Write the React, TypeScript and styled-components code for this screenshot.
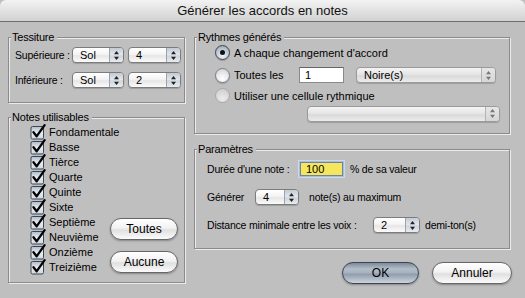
import React from 'react';
import styled, { createGlobalStyle, css } from 'styled-components';

const GlobalStyle = createGlobalStyle`
  html, body {
    margin: 0;
    padding: 0;
    background: #bfbfbf;
  }
  body {
    font-family: 'Liberation Sans', Arial, sans-serif;
    font-size: 11px;
    color: #000;
  }
`;

const Window = styled.div`
  width: 525px;
  height: 298px;
  overflow: hidden;
  background: #bfbfbf;
`;

const TitleBar = styled.div`
  height: 21px;
  border-bottom: 1px solid #6e6e6e;
  border-radius: 6px 6px 0 0;
  background: linear-gradient(#f3f3f3, #e2e2e2 50%, #d2d2d2);
  display: flex;
  align-items: center;
  justify-content: center;
  font-size: 13px;
  color: #111;
`;

const Body = styled.div`
  display: flex;
  gap: 9px;
  padding-left: 8px;
`;

const Column = styled.div<{ $w: number }>`
  width: ${(p) => p.$w}px;
  display: flex;
  flex-direction: column;
`;

const Group = styled.div<{ $top: number; $h: number }>`
  position: relative;
  box-sizing: border-box;
  margin-top: ${(p) => p.$top}px;
  height: ${(p) => p.$h}px;
  border: 1px solid #8b8b8b;
  box-shadow: inset 1px 1px 0 #ececec, 1px 1px 0 #ececec;
`;

const Legend = styled.span`
  position: absolute;
  top: -7px;
  left: 2px;
  padding: 0 3px 0 1px;
  background: #bfbfbf;
  line-height: 12px;
  font-size: 11px;
  letter-spacing: -0.2px;
`;

const Inner = styled.div<{ $pt: number; $pl: number }>`
  padding: ${(p) => p.$pt}px 0 0 ${(p) => p.$pl}px;
`;

const Row = styled.div<{ $h?: number; $mt?: number }>`
  display: flex;
  align-items: center;
  height: ${(p) => p.$h ?? 16}px;
  margin-top: ${(p) => p.$mt ?? 0}px;
`;

const Label = styled.span<{ $w?: number }>`
  width: ${(p) => (p.$w ? `${p.$w}px` : 'auto')};
  flex-shrink: 0;
  white-space: nowrap;
  font-size: 10.5px;
  letter-spacing: -0.2px;
`;

const Unit = styled.span<{ $ml: number }>`
  margin-left: ${(p) => p.$ml}px;
  white-space: nowrap;
  font-size: 10.5px;
  letter-spacing: -0.2px;
`;

/* popup menu */
const PopupBox = styled.div<{ $w: number; $flat?: boolean; $ml?: number }>`
  box-sizing: border-box;
  flex-shrink: 0;
  width: ${(p) => p.$w}px;
  height: 16px;
  margin-left: ${(p) => p.$ml ?? 0}px;
  border: 1px solid #7c7c7c;
  border-radius: 4px;
  display: flex;
  overflow: hidden;
  box-shadow: 0 1px 1px rgba(0, 0, 0, 0.18);
  background: linear-gradient(#ffffff, #f4f4f4 45%, #e6e6e6 55%, #fbfbfb);
  ${(p) =>
    p.$flat &&
    css`
      border-color: #9a9a9a;
      background: linear-gradient(#f4f4f4, #e4e4e4 50%, #d9d9d9 55%, #ececec);
    `}
`;

const PopupText = styled.span`
  flex: 1;
  padding-left: 7px;
  line-height: 14px;
  font-size: 11px;
`;

const PopupArrows = styled.span<{ $flat?: boolean }>`
  width: 13px;
  border-left: 1px solid #9aa3ad;
  display: flex;
  align-items: center;
  justify-content: center;
  background: linear-gradient(#c2cad3, #e5e9ee 50%, #cdd4dc 55%, #e8ecf0);
  ${(p) =>
    p.$flat &&
    css`
      border-left-color: #b3b3b3;
      background: linear-gradient(#e6e6e6, #d6d6d6);
    `}
`;

const Popup: React.FC<{ w: number; value?: string; flat?: boolean; ml?: number }> = ({
  w,
  value,
  flat,
  ml,
}) => (
  <PopupBox $w={w} $flat={flat} $ml={ml}>
    <PopupText>{value}</PopupText>
    <PopupArrows $flat={flat}>
      <svg width="5" height="9" viewBox="0 0 5 9">
        <path d="M2.5 0 L5 3.2 L0 3.2 Z M2.5 9 L5 5.8 L0 5.8 Z" fill={flat ? '#777' : '#222'} />
      </svg>
    </PopupArrows>
  </PopupBox>
);

/* checkbox list */
const CheckList = styled.div`
  width: 80px;
  display: flex;
  flex-direction: column;
`;

const CheckRow = styled.div`
  display: flex;
  align-items: center;
  height: 15px;
  font-size: 11px;
`;

const CheckIcon = styled.svg`
  flex-shrink: 0;
`;

const CheckText = styled.span`
  margin-left: 3px;
  white-space: nowrap;
`;

const Check: React.FC<{ label: string }> = ({ label }) => (
  <CheckRow>
    <CheckIcon width="16" height="16" viewBox="0 0 16 16">
      <defs>
        <linearGradient id="cbg" x1="0" y1="0" x2="0" y2="1">
          <stop offset="0" stopColor="#aebbc9" />
          <stop offset="0.5" stopColor="#e9edf1" />
          <stop offset="1" stopColor="#d0d8e1" />
        </linearGradient>
      </defs>
      <rect x="1" y="2.5" width="12.5" height="12.5" rx="1.5" fill="url(#cbg)" stroke="#3d4652" />
      <path
        d="M3.5 8.2 L6.6 12.3 L14.6 1.2"
        fill="none"
        stroke="#050505"
        strokeWidth="2.3"
        strokeLinecap="round"
        strokeLinejoin="round"
      />
    </CheckIcon>
    <CheckText>{label}</CheckText>
  </CheckRow>
);

/* radios */
const Radio = styled.span<{ $on?: boolean; $off?: boolean }>`
  position: relative;
  box-sizing: border-box;
  width: 15px;
  height: 15px;
  flex-shrink: 0;
  border-radius: 50%;
  border: 1px solid #77808a;
  background: radial-gradient(circle at 50% 75%, #ffffff, #e6e6e6 55%, #c9c9c9);
  box-shadow: 0 1px 1px rgba(0, 0, 0, 0.2);
  ${(p) =>
    p.$on &&
    css`
      border-color: #3e4752;
      background: radial-gradient(circle at 50% 75%, #eef2f6, #b9c4d0 60%, #8995a3);
      &::after {
        content: '';
        position: absolute;
        left: 4px;
        top: 4px;
        width: 5px;
        height: 5px;
        border-radius: 50%;
        background: #111;
      }
    `}
  ${(p) =>
    p.$off &&
    css`
      border-color: #a9a9a9;
      background: radial-gradient(circle at 50% 75%, #ececec, #d8d8d8 60%, #c8c8c8);
      box-shadow: none;
    `}
`;

const RadioText = styled.span<{ $w?: number }>`
  margin-left: 4px;
  white-space: nowrap;
  font-size: 11px;
  color: #000;
  flex-shrink: 0;
  width: ${(p) => (p.$w ? `${p.$w}px` : 'auto')};
`;

const TextField = styled.div<{ $w: number; $h: number; $focus?: boolean }>`
  box-sizing: border-box;
  flex-shrink: 0;
  width: ${(p) => p.$w}px;
  height: ${(p) => p.$h}px;
  padding-left: 5px;
  line-height: ${(p) => p.$h - 2}px;
  border: 1px solid #8a8a8a;
  border-top-color: #666;
  background: #fff;
  ${(p) =>
    p.$focus &&
    css`
      background: #f6e65e;
      border-color: #6f83a0;
      box-shadow: 0 0 0 1px #a9bedb, 0 0 0 2px #cdd9ea;
    `}
`;

/* push buttons */
const PushButton = styled.div<{ $w: number; $primary?: boolean }>`
  box-sizing: border-box;
  width: ${(p) => p.$w}px;
  height: 22px;
  border-radius: 11px;
  border: 1px solid #676767;
  display: flex;
  align-items: center;
  justify-content: center;
  font-size: 12px;
  background: linear-gradient(#ffffff, #f2f2f2 45%, #e0e0e0 55%, #fbfbfb);
  box-shadow: 0 1px 2px rgba(0, 0, 0, 0.3);
  ${(p) =>
    p.$primary &&
    css`
      border-color: #3c4653;
      background: linear-gradient(#7d8a9a, #b3bec9 30%, #a5b1be 50%, #8f9cab 55%, #ccd4dd);
    `}
`;

const ButtonStack = styled.div`
  display: flex;
  flex-direction: column;
  gap: 11px;
  margin-top: 94px;
`;

const Footer = styled.div`
  display: flex;
  justify-content: flex-end;
  gap: 13px;
  margin-top: 13px;
  margin-right: -2px;
`;

const NotesLayout = styled.div`
  display: flex;
`;

const notes = [
  'Fondamentale',
  'Basse',
  'Tièrce',
  'Quarte',
  'Quinte',
  'Sixte',
  'Septième',
  'Neuvième',
  'Onzième',
  'Treizième',
];

export default function App() {
  return (
    <Window>
      <GlobalStyle />
      <TitleBar>Générer les accords en notes</TitleBar>
      <Body>
        <Column $w={177}>
          <Group $top={15} $h={66}>
            <Legend>Tessiture</Legend>
            <Inner $pt={9} $pl={6}>
              <Row>
                <Label $w={57}>Supérieure :</Label>
                <Popup w={52} value="Sol" />
                <Popup w={53} value="4" ml={4} />
              </Row>
              <Row $mt={9}>
                <Label $w={57}>Inférieure :</Label>
                <Popup w={52} value="Sol" />
                <Popup w={53} value="2" ml={4} />
              </Row>
            </Inner>
          </Group>
          <Group $top={14} $h={166}>
            <Legend>Notes utilisables</Legend>
            <Inner $pt={6} $pl={21}>
              <NotesLayout>
                <CheckList>
                  {notes.map((n) => (
                    <Check key={n} label={n} />
                  ))}
                </CheckList>
                <ButtonStack>
                  <PushButton $w={68}>Toutes</PushButton>
                  <PushButton $w={68}>Aucune</PushButton>
                </ButtonStack>
              </NotesLayout>
            </Inner>
          </Group>
        </Column>
        <Column $w={316}>
          <Group $top={15} $h={97}>
            <Legend>Rythmes générés</Legend>
            <Inner $pt={7} $pl={20}>
              <Row $h={15}>
                <Radio $on />
                <RadioText>A chaque changement d'accord</RadioText>
              </Row>
              <Row $h={18} $mt={6}>
                <Radio />
                <RadioText $w={65}>Toutes les</RadioText>
                <TextField $w={45} $h={16}>
                  1
                </TextField>
                <Popup w={140} value="Noire(s)" flat ml={12} />
              </Row>
              <Row $h={15} $mt={4}>
                <Radio $off />
                <RadioText>Utiliser une cellule rythmique</RadioText>
              </Row>
              <Row $h={17} $mt={2}>
                <Popup w={193} flat ml={92} />
              </Row>
            </Inner>
          </Group>
          <Group $top={15} $h={100}>
            <Legend>Paramètres</Legend>
            <Inner $pt={12} $pl={12}>
              <Row $h={14}>
                <Label $w={93}>Durée d'une note :</Label>
                <TextField $w={43} $h={14} $focus>
                  100
                </TextField>
                <Unit $ml={7}>% de sa valeur</Unit>
              </Row>
              <Row $mt={13}>
                <Label $w={48}>Générer</Label>
                <Popup w={44} value="4" />
                <Unit $ml={10}>note(s) au maximum</Unit>
              </Row>
              <Row $mt={12}>
                <Label $w={166}>Distance minimale entre les voix :</Label>
                <Popup w={47} value="2" />
                <Unit $ml={5}>demi-ton(s)</Unit>
              </Row>
            </Inner>
          </Group>
          <Footer>
            <PushButton $w={77} $primary>
              OK
            </PushButton>
            <PushButton $w={80}>Annuler</PushButton>
          </Footer>
        </Column>
      </Body>
    </Window>
  );
}
